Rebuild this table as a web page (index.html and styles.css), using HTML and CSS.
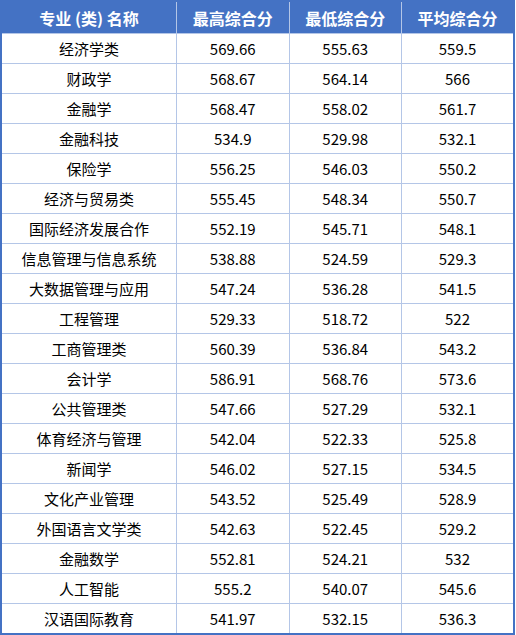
FILE: index.html
```html
<!DOCTYPE html>
<html lang="zh-CN">
<head>
<meta charset="utf-8">
<link rel="stylesheet" href="styles.css">
</head>
<body>
<table class="scores">
<thead>
<tr><th class="c-name">专业 (类) 名称</th><th>最高综合分</th><th>最低综合分</th><th>平均综合分</th></tr>
</thead>
<tbody>
<tr><td>经济学类</td><td>569.66</td><td>555.63</td><td>559.5</td></tr>
<tr><td>财政学</td><td>568.67</td><td>564.14</td><td>566</td></tr>
<tr><td>金融学</td><td>568.47</td><td>558.02</td><td>561.7</td></tr>
<tr><td>金融科技</td><td>534.9</td><td>529.98</td><td>532.1</td></tr>
<tr><td>保险学</td><td>556.25</td><td>546.03</td><td>550.2</td></tr>
<tr><td>经济与贸易类</td><td>555.45</td><td>548.34</td><td>550.7</td></tr>
<tr><td>国际经济发展合作</td><td>552.19</td><td>545.71</td><td>548.1</td></tr>
<tr><td>信息管理与信息系统</td><td>538.88</td><td>524.59</td><td>529.3</td></tr>
<tr><td>大数据管理与应用</td><td>547.24</td><td>536.28</td><td>541.5</td></tr>
<tr><td>工程管理</td><td>529.33</td><td>518.72</td><td>522</td></tr>
<tr><td>工商管理类</td><td>560.39</td><td>536.84</td><td>543.2</td></tr>
<tr><td>会计学</td><td>586.91</td><td>568.76</td><td>573.6</td></tr>
<tr><td>公共管理类</td><td>547.66</td><td>527.29</td><td>532.1</td></tr>
<tr><td>体育经济与管理</td><td>542.04</td><td>522.33</td><td>525.8</td></tr>
<tr><td>新闻学</td><td>546.02</td><td>527.15</td><td>534.5</td></tr>
<tr><td>文化产业管理</td><td>543.52</td><td>525.49</td><td>528.9</td></tr>
<tr><td>外国语言文学类</td><td>542.63</td><td>522.45</td><td>529.2</td></tr>
<tr><td>金融数学</td><td>552.81</td><td>524.21</td><td>532</td></tr>
<tr><td>人工智能</td><td>555.2</td><td>540.07</td><td>545.6</td></tr>
<tr><td>汉语国际教育</td><td>541.97</td><td>532.15</td><td>536.3</td></tr>
</tbody>
</table>
</body>
</html>
```
FILE: styles.css
```css
html, body {
  margin: 0;
  padding: 0;
  background: #ffffff;
}
body {
  font-family: "Noto Sans CJK SC", "Noto Sans", sans-serif;
  color: #000000;
}
.scores {
  border-collapse: collapse;
  table-layout: fixed;
  width: 515px;
  border: 2px solid #4472c4;
}
.scores th {
  background: #4472c4;
  color: #ffffff;
  font-weight: bold;
  font-size: 16px;
  height: 31px;
  padding: 0;
  text-align: center;
  border-left: 1px solid #b4c6e7;
  border-bottom: 1px solid #b4c6e7;
  line-height: 1;
}
.scores th:first-child { border-left: none; }
.scores .c-name { width: 174px; }
.scores td {
  font-size: 15px;
  height: 29px;
  padding: 0;
  text-align: center;
  border: 1px solid #b4c6e7;
  line-height: 1;
}
```
